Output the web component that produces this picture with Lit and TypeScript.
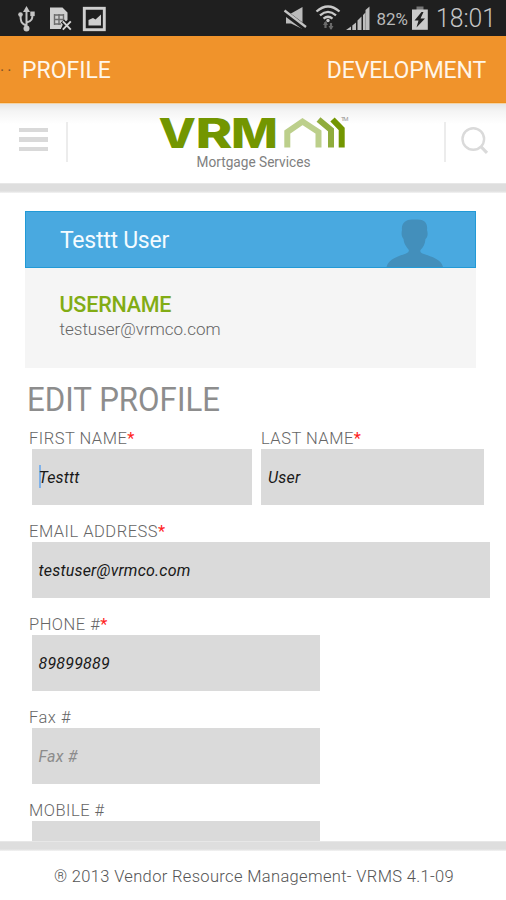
import { LitElement, html, css, svg, nothing } from "lit";
import { customElement, property } from "lit/decorators.js";

@customElement("status-bar")
class StatusBar extends LitElement {
  static styles = css`
    :host {
      display: block;
      height: 36px;
      background: #1f1f1f;
    }
    svg {
      display: block;
    }
    .label {
      fill: #b9b9b9;
      font-family: Roboto, sans-serif;
    }
    .pct {
      font-size: 17px;
    }
    .clock {
      font-size: 26px;
      font-weight: 300;
      fill: #c6c6c6;
    }
  `;
  render() {
    return html`<svg width="506" height="36" viewBox="0 0 506 36">
      ${svg`
      <g fill="none" stroke="#c4c4c4" stroke-width="2">
        <path d="M26.500 10V28M26.500 25.500C21 24 20.500 21 20.500 15M26.500 22.500C32 21 32.500 19 32.500 14"/>
      </g>
      <g fill="#c4c4c4">
        <path d="M26.500 6L30 12H23z"/><circle cx="26.500" cy="28.500" r="3"/>
        <circle cx="20.500" cy="14.500" r="2.300"/><rect x="30.300" y="11.500" width="4.400" height="4.600"/>
      </g>
      <path d="M50 7.500H62.500L67.500 12.500V20L63 24L61 29H50z" fill="#cfcfcf"/>
      <path d="M54 15H64M54 19.500H64M54 24H61M54.500 14V25M59 14V25M63.500 14V20" stroke="#6c6c6c" stroke-width="1.400" fill="none"/>
      <path d="M62.500 21L71 30M71 21L62.500 30" stroke="#1f1f1f" stroke-width="4.500"/>
      <path d="M62.800 21.300L70.800 29.700M70.800 21.300L62.800 29.700" stroke="#d6d6d6" stroke-width="1.900"/>
      <rect x="84.300" y="8.300" width="20" height="21.400" fill="none" stroke="#cfcfcf" stroke-width="2.900"/>
      <path d="M88.500 25.500V20L93 18L95.500 19.500L101 14.500V25.500z" fill="#cfcfcf"/>
      <path d="M286 13.500H291L302.500 7V29L291 23.500H286z" fill="#bcbcbc"/>
      <path d="M284 12L306 28.500" stroke="#1f1f1f" stroke-width="5.500"/>
      <path d="M284.500 10.500L306 27" stroke="#c4c4c4" stroke-width="2.300"/>
      <g fill="none" stroke="#c9c9c9" stroke-width="2.300">
        <path d="M316.500 11.500Q328 1.500 339.500 11.500"/>
        <path d="M320 15.300Q328 8.500 336 15.300"/>
        <path d="M323.500 18.600Q328 15 332.500 18.600"/>
      </g>
      <circle cx="328" cy="20.500" r="1.700" fill="#c9c9c9"/>
      <path d="M325.500 22V28M331 23V29" stroke="#6a6a6a" stroke-width="2.200"/>
      <path d="M323 25L325.500 21L328 25zM328.500 26H333.500L331 30z" fill="#6a6a6a"/>
      <path d="M346 30L351 26.500V30zM352.300 25.500L356 22.500V30H352.300zM357.500 20.500L361.500 16.500V30H357.500zM363 15L365.500 12.500V30H363z" fill="#bdbdbd"/>
      <path d="M365.500 10L369.500 6.500V30H365.500z" fill="#bdbdbd"/>
      <text class="label pct" x="376.500" y="25" textLength="31.500" lengthAdjust="spacingAndGlyphs">82%</text>
      <rect x="416.500" y="6.500" width="7" height="4" fill="#777"/>
      <rect x="412" y="9.500" width="15.800" height="20.300" fill="#cbcbcb"/>
      <path d="M421.500 12L414.500 20.500H418.500L416.500 27.500L425 18.500H420.500L423.500 12z" fill="#222"/>
      <text class="label clock" x="436" y="27" textLength="60" lengthAdjust="spacingAndGlyphs">18:01</text>
      `}
    </svg>`;
  }
}

@customElement("brand-header")
class BrandHeader extends LitElement {
  static styles = css`
    :host {
      display: flex;
      height: 80px;
      box-sizing: border-box;
      background: linear-gradient(#e6e6e6, #f4f4f4 7px, #fff 20px);
      border-top: 1px solid #f3d3a6;
    }
    .menu {
      display: flex;
      flex-direction: column;
      gap: 5px;
      width: 66px;
      padding: 24px 0 0 18.5px;
      height: 56px;
      box-sizing: border-box;
    }
    .menu i {
      width: 29px;
      height: 4.4px;
      background: #d9d9d9;
    }
    .rule {
      width: 1.5px;
      height: 40px;
      margin-top: 18px;
      background: #ececec;
    }
    .left,
    .right {
      display: flex;
    }
    .left {
      width: 150px;
    }
    .right {
      width: 62px;
      margin-left: auto;
    }
    .vrm {
      font: 800 41px Inter, sans-serif;
      fill: #739600;
    }
    .sub {
      font: 400 15px Roboto, sans-serif;
      fill: #808080;
    }
    .tm {
      font: 400 6px Roboto, sans-serif;
      fill: #999;
    }
  `;
  render() {
    return html`
      <div class="left">
        <div class="menu"><i></i><i></i><i></i></div>
        <div class="rule"></div>
      </div>
      <svg width="210" height="70" viewBox="150 104 210 70">
        ${svg`
        <text class="vrm" x="158.500" y="148" textLength="37.500" lengthAdjust="spacingAndGlyphs">V</text>
        <text class="vrm" x="195.500" y="148" textLength="37" lengthAdjust="spacingAndGlyphs">R</text>
        <text class="vrm" x="231" y="148" textLength="47" lengthAdjust="spacingAndGlyphs">M</text>
        <g fill="none" stroke-width="6">
          <path d="M287.300 147.500V132L302.500 121.500L318.500 132V147.500" stroke="#bccf8b"/>
          <path d="M318.500 119.500L331 130V147.500" stroke="#8fac3c"/>
          <path d="M332.500 119.500L341.700 129V147.500" stroke="#739600"/>
        </g>
        <text class="tm" x="341" y="121" textLength="7.500">TM</text>
        <text class="sub" x="196.500" y="166.500" textLength="114" lengthAdjust="spacingAndGlyphs">Mortgage Services</text>
        `}
      </svg>
      <div class="right">
        <div class="rule"></div>
        <svg width="60" height="70" viewBox="446 104 60 70">
          <circle cx="473.300" cy="139" r="10.800" fill="none" stroke="#dadada" stroke-width="2.400" />
          <path d="M480.800 146.500L487 152.800" stroke="#dadada" stroke-width="3.200" />
        </svg>
      </div>
    `;
  }
}

@customElement("form-field")
class FormField extends LitElement {
  @property() label = "";
  @property() value = "";
  @property() hint = "";
  @property({ type: Boolean }) required = false;
  @property({ type: Boolean }) caret = false;
  static styles = css`
    :host {
      display: block;
      font-family: Roboto, sans-serif;
    }
    .label {
      height: 22px;
      line-height: 23px;
      margin-left: var(--label-shift, -2.5px);
      font-size: 16.5px;
      font-weight: 300;
      letter-spacing: 0.5px;
      color: #666;
      white-space: nowrap;
    }
    .star {
      color: #f22;
      font-weight: 400;
    }
    .box {
      display: flex;
      align-items: center;
      height: 56px;
      box-sizing: border-box;
      background: #dadada;
      padding: 1px 0 0 7px;
      font-size: 16px;
      font-style: italic;
      letter-spacing: 0.2px;
      color: #181818;
    }
    .hint {
      color: #8c8c8c;
    }
    .caret {
      width: 2.5px;
      height: 23px;
      margin: -3px -2.5px 0 0;
      background: #7fb2ea;
    }
  `;
  render() {
    return html`
      <div class="label">${this.label}${this.required ? html`<span class="star">*</span>` : nothing}</div>
      <div class="box">
        ${this.caret ? html`<span class="caret"></span>` : nothing}
        ${this.value ? html`<span>${this.value}</span>` : html`<span class="hint">${this.hint}</span>`}
      </div>
    `;
  }
}

@customElement("app-root")
class AppRoot extends LitElement {
  static styles = css`
    :host {
      display: flex;
      flex-direction: column;
      width: 506px;
      height: 900px;
      overflow: hidden;
      background: #fff;
      font-family: Roboto, sans-serif;
    }
    .tabs {
      display: flex;
      align-items: center;
      height: 67px;
      box-sizing: border-box;
      padding: 2px 20px 0 0;
      background: #f0932b;
      color: #fff6e9;
      font-size: 23px;
      border-bottom: 1px solid #ee8f1c;
    }
    .dots {
      width: 22px;
      font-size: 16px;
      letter-spacing: 3px;
      color: #80542a;
    }
    .dev {
      margin-left: auto;
      letter-spacing: -0.15px;
    }
    .band {
      height: 10px;
      background: linear-gradient(#ececec, #dedede 1.5px, #dedede 8px, #f4f4f4);
      flex: none;
    }
    main {
      height: 648px;
      overflow: hidden;
    }
    .card {
      margin: 18px 30.5px 0 24.5px;
      height: 157px;
      background: #f5f5f5;
    }
    .name {
      display: flex;
      align-items: center;
      justify-content: space-between;
      height: 57px;
      box-sizing: border-box;
      border: 1px solid #229ad6;
      background: #49a9e0;
      color: #f4fbff;
      font-size: 23px;
      letter-spacing: -0.25px;
      padding: 0 31px 0 34.5px;
    }
    .name span {
      padding-top: 2px;
    }
    .user {
      padding: 23px 0 0 35px;
      line-height: 27px;
      font-size: 21.5px;
      font-weight: 500;
      letter-spacing: -0.2px;
      color: #82ac14;
    }
    .mail {
      padding-left: 35px;
      line-height: 23px;
      font-size: 17px;
      font-weight: 300;
      color: #666;
    }
    .title {
      display: block;
      margin: 5px 0 0 20px;
    }
    .title text {
      font: 400 34px Roboto, sans-serif;
      fill: #8d8d8d;
    }
    .form {
      display: grid;
      grid-template-columns: 220.5px 223px;
      column-gap: 9px;
      row-gap: 15px;
      padding: 6px 0 0 31.5px;
    }
    .last {
      --label-shift: 0;
    }
    .wide {
      grid-column: 1 / -1;
      width: 458px;
    }
    .mid {
      grid-column: 1 / -1;
      width: 288px;
    }
    footer {
      display: flex;
      justify-content: center;
      align-items: center;
      flex: 1;
      font-size: 16.5px;
      font-weight: 300;
      letter-spacing: 0.34px;
      color: #555;
      padding: 2px 0 0 2px;
    }
  `;
  render() {
    return html`
      <status-bar></status-bar>
      <nav class="tabs">
        <span class="dots">··</span><span>PROFILE</span><span class="dev">DEVELOPMENT</span>
      </nav>
      <brand-header></brand-header>
      <div class="band"></div>
      <main>
        <section class="card">
          <div class="name">
            <span>Testtt User</span>
            <svg width="58" height="55" viewBox="386 212 58 55">
              <path
                d="M386.500 267C389 258 400 256 406 253.500Q410 252 408.500 249.500C405 245 404 243 403.500 239C401 236 401.500 232 402 230C401 223 406 219.500 412 219.500H418C424 219.500 428 223 427 230C428 233 428 237 425.500 239C425 244 423.500 247 420.500 250Q419.500 252.500 424 254C432 257 441 259 443 267z"
                fill="#438fbb"
              />
            </svg>
          </div>
          <div class="user">USERNAME</div>
          <div class="mail">testuser@vrmco.com</div>
        </section>
        <svg class="title" width="210" height="48" viewBox="20 373 210 48">
          <text x="27" y="410.500" textLength="193" lengthAdjust="spacingAndGlyphs">EDIT PROFILE</text>
        </svg>
        <div class="form">
          <form-field label="FIRST NAME" value="Testtt" required caret></form-field>
          <form-field class="last" label="LAST NAME" value="User" required></form-field>
          <form-field class="wide" label="EMAIL ADDRESS" value="testuser@vrmco.com" required></form-field>
          <form-field class="mid" label="PHONE #" value="89899889" required></form-field>
          <form-field class="mid" label="Fax #" hint="Fax #"></form-field>
          <form-field class="mid" label="MOBILE #"></form-field>
        </div>
      </main>
      <div class="band"></div>
      <footer>® 2013 Vendor Resource Management- VRMS 4.1-09</footer>
    `;
  }
}
